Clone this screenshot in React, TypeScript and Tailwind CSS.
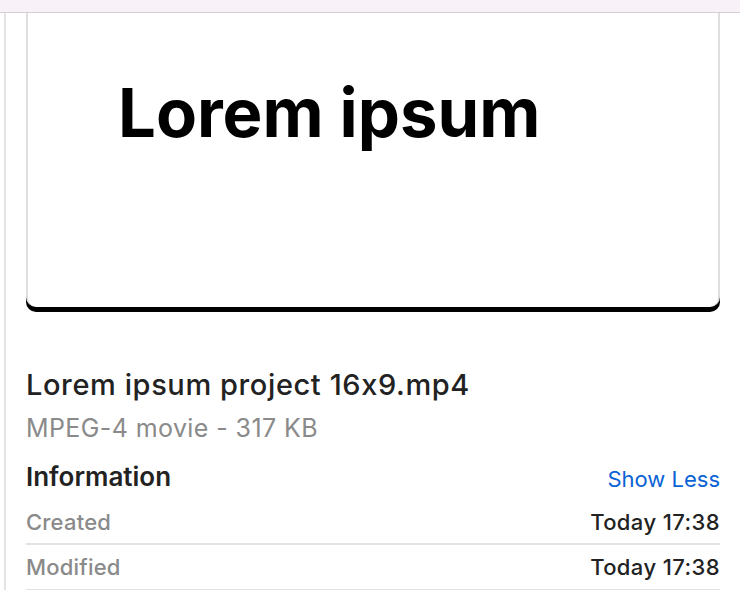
import React from "react";

export default function App() {
  return (
    <div
      className="w-[740px] h-[590px] overflow-hidden bg-white [font-feature-settings:'calt'_0]"
      style={{ fontFamily: "Inter, 'Noto Sans', sans-serif" }}
    >
      <div className="h-[13px] bg-[#f8f1f8] border-b border-[#d2d2d2]" />
      <div className="ml-[4px] h-[577px] border-l-2 border-[#e4e4e4] pl-[20px] pr-[20px]">
        <div className="w-[694px]">
          <div className="h-[294px] border-x-2 border-[#dedede] rounded-b-[10px] bg-white shadow-[0_5px_0_0_#000] pl-[90px] pt-[66px]">
            <div className="text-[67px] font-bold leading-none text-black">
              Lorem ipsum
            </div>
          </div>
          <div className="pt-[62px]">
            <div className="text-[29px] font-medium leading-[32px] text-[#222] tracking-[0.6px]">
              Lorem ipsum project 16x9.mp4
            </div>
            <div className="mt-[12px] text-[25px] leading-[30px] text-[#8a8a8a] tracking-[0.4px]">
              MPEG-4 movie - 317 KB
            </div>
            <div className="mt-[18px] flex items-center justify-between h-[32px]">
              <div className="text-[26px] font-semibold leading-[32px] text-[#222]">
                Information
              </div>
              <div className="text-[22px] leading-[28px] text-[#0a63d6] mt-[3px]">Show Less</div>
            </div>
            <div className="mt-[8px] flex items-center justify-between h-[44px] border-b-2 border-[#e3e3e3]">
              <div className="text-[22px] font-medium text-[#8a8a8a] tracking-[0.2px]">Created</div>
              <div className="text-[22px] font-medium text-[#222] tracking-[0.4px]">Today 17:38</div>
            </div>
            <div className="flex items-center justify-between h-[46px] border-b-2 border-[#e3e3e3]">
              <div className="text-[22px] font-medium text-[#8a8a8a] tracking-[0.2px]">Modified</div>
              <div className="text-[22px] font-medium text-[#222] tracking-[0.4px]">Today 17:38</div>
            </div>
          </div>
        </div>
      </div>
    </div>
  );
}
